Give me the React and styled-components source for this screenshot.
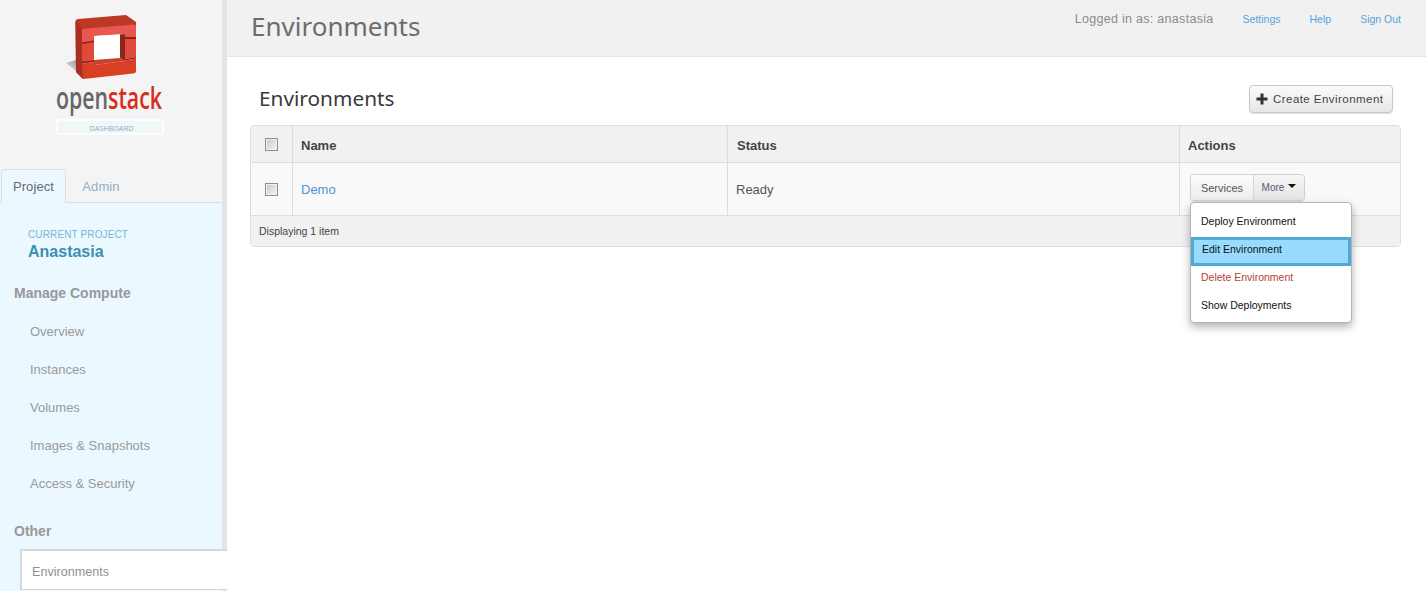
import React from "react";
import styled, { createGlobalStyle } from "styled-components";

const Global = createGlobalStyle`
  html, body { margin: 0; padding: 0; background: #fff; }
  body { font-family: "Liberation Sans", Arial, sans-serif; }
  * { box-sizing: border-box; }
`;
const Page = styled.div`
  display: flex;
  height: 100vh;
  overflow: hidden;
`;
const Sidebar = styled.aside`
  flex: 0 0 227px;
  display: flex;
  flex-direction: column;
  height: 591px;
  background: #f4f4f4;
  border-right: 5px solid #e4e4e4;
`;
const LogoBox = styled.div`
  height: 169px;
  flex: none;
`;
const Logo = styled.svg`
  display: block;
`;
const Tabs = styled.div`
  display: flex;
  height: 34px;
  flex: none;
  border-bottom: 1px solid #dcdfe2;
  padding-left: 1px;
`;
const Tab = styled.div`
  width: ${(p) => (p.$active ? "65px" : "70px")};
  height: 34px;
  display: flex;
  align-items: center;
  justify-content: center;
  font-size: 13px;
  letter-spacing: 0.1px;
  color: ${(p) => (p.$active ? "#6a6a72" : "#90aec4")};
  background: ${(p) => (p.$active ? "#ecf8ff" : "transparent")};
  border: ${(p) => (p.$active ? "1px solid #dcdfe2" : "none")};
  border-bottom: none;
  border-radius: 4px 4px 0 0;
`;
const Panel = styled.div`
  flex: 1;
  background: #ecf8ff;
  padding-top: 26px;
  min-height: 0;
`;
const ProjectLabel = styled.div`
  margin-left: 28px;
  font-size: 10px;
  letter-spacing: 0.13px;
  line-height: 11px;
  color: #7ab5cf;
`;
const ProjectName = styled.div`
  margin: 2px 0 0 28px;
  font-size: 16px;
  line-height: 20px;
  font-weight: bold;
  color: #3d8fb3;
`;
const GroupTitle = styled.div`
  margin: ${(p) => p.$top}px 0 0 14px;
  font-size: 14px;
  line-height: 20px;
  font-weight: bold;
  color: #989898;
`;
const NavList = styled.div`
  display: flex;
  flex-direction: column;
  margin-top: 10px;
`;
const NavItem = styled.div`
  height: 38px;
  line-height: 38px;
  padding-left: 30px;
  font-size: 13px;
  color: #9a9a9a;
`;
const ActiveNav = styled.div`
  height: 41px;
  margin: 8px -5px 0 20px;
  padding-left: 10px;
  line-height: 42px;
  font-size: 12.6px;
  color: #8f8f8f;
  background: #fff;
  border: 2px solid #d8d8d8;
  border-right: none;
  border-bottom-width: 1px;
  position: relative;
`;
const Main = styled.main`
  flex: 1;
  min-width: 0;
  display: flex;
  flex-direction: column;
`;
const TopBar = styled.header`
  flex: none;
  height: 57px;
  background: #f1f1f1;
  border-bottom: 1px solid #e4e4e4;
  display: flex;
  justify-content: space-between;
  padding: 0 25px 0 24px;
`;
const PageTitle = styled.h1`
  margin: 8px 0 0;
  font-family: "Noto Sans", sans-serif;
  font-weight: 400;
  font-size: 26px;
  line-height: 36px;
  color: #6d6d6d;
`;
const UserNav = styled.nav`
  display: flex;
  align-items: center;
  height: 38px;
`;
const UserLabel = styled.span`
  font-size: 12.5px;
  letter-spacing: 0.3px;
  color: #8b8b8b;
  margin-right: 29px;
`;
const TopLink = styled.a`
  font-size: 10.5px;
  color: #52a5de;
  margin-left: ${(p) => p.$gap || 0}px;
`;
const Content = styled.div`
  padding: 28px 25px 0 23px;
  position: relative;
`;
const Heading = styled.div`
  display: flex;
  align-items: center;
  justify-content: space-between;
  height: 28px;
  padding: 0 8px 0 9px;
`;
const SubTitle = styled.h2`
  margin: -3px 0 0;
  font-family: "Noto Sans", sans-serif;
  font-weight: 400;
  font-size: 20.8px;
  color: #3a3a3a;
`;
const CreateButton = styled.button`
  display: flex;
  align-items: center;
  gap: 5px;
  width: 144px;
  height: 28px;
  padding: 0 0 0 6px;
  font-family: "Liberation Sans", sans-serif;
  font-size: 11.5px;
  letter-spacing: 0.45px;
  color: #444;
  background: linear-gradient(#fbfbfb, #e6e6e6);
  border: 1px solid #c8c8c8;
  border-radius: 4px;
  box-shadow: 0 1px 1px rgba(0, 0, 0, 0.12);
`;
const Table = styled.div`
  margin-top: 12px;
  width: 1151px;
  border: 1px solid #dddddd;
  border-radius: 4px;
  overflow: hidden;
`;
const Row = styled.div`
  display: grid;
  grid-template-columns: 41px 435px 452px 1fr;
  height: ${(p) => p.$h}px;
  background: ${(p) => p.$bg};
  border-bottom: 1px solid #dddddd;
`;
const Cell = styled.div`
  display: flex;
  align-items: center;
  padding-left: ${(p) => p.$pad ?? 8}px;
  padding-top: ${(p) => (p.$head ? "2px" : "0")};
  border-left: ${(p) => (p.$first ? "none" : "1px solid #dddddd")};
  font-size: 13px;
  font-weight: ${(p) => (p.$head ? "bold" : "normal")};
  color: ${(p) => (p.$head ? "#444" : "#555")};
`;
const CheckCell = styled(Cell)`
  justify-content: center;
  padding: 0;
`;
const Check = styled.span`
  display: block;
  width: 13px;
  height: 13px;
  border: 1px solid #8e8e8e;
  background: linear-gradient(135deg, #c8c8c8, #f6f6f6);
  box-shadow: inset 0 0 0 1px #f0f0f0;
`;
const DemoLink = styled.a`
  font-size: 13px;
  color: #4f94d4;
`;
const Footer = styled.div`
  height: 30px;
  line-height: 30px;
  padding-left: 8px;
  font-size: 10.5px;
  color: #444;
  background: #f1f1f1;
`;
const ActionGroup = styled.div`
  display: flex;
  height: 27px;
  margin: -3px 0 0 2px;
  border: 1px solid #d0d0d0;
  border-radius: 4px;
  overflow: hidden;
  box-shadow: 0 1px 1px rgba(0, 0, 0, 0.1);
`;
const ActionButton = styled.div`
  width: ${(p) => p.$w}px;
  display: flex;
  align-items: center;
  justify-content: center;
  gap: 4px;
  font-size: ${(p) => p.$fs}px;
  color: ${(p) => p.$color};
  background: ${(p) => p.$bg};
  border-left: ${(p) => (p.$split ? "1px solid #d6d6d6" : "none")};
`;
const Caret = styled.span`
  width: 0;
  height: 0;
  margin-top: -3px;
  border-left: 4px solid transparent;
  border-right: 4px solid transparent;
  border-top: 4px solid #111;
`;
const Menu = styled.div`
  position: absolute;
  left: 963px;
  top: 145px;
  width: 162px;
  height: 121px;
  padding: 4px 0;
  background: #fff;
  border: 1px solid #b4b4b4;
  border-radius: 4px;
  box-shadow: 0 4px 8px rgba(0, 0, 0, 0.3);
`;
const MenuItem = styled.div`
  height: 28px;
  line-height: 28px;
  padding-left: 10px;
  font-size: 10.5px;
  color: ${(p) => p.$color || "#111"};
`;
const ActiveMenuItem = styled(MenuItem)`
  height: 29px;
  margin: 2px 0 -3px;
  line-height: 18px;
  padding-left: 8px;
  background: #97dcff;
  border: 3px solid #52a7d4;
`;

export default function App() {
  return (
    <Page>
      <Global />
      <Sidebar>
        <LogoBox>
          <Logo width="222" height="169" viewBox="0 0 222 169">
            <defs>
              <linearGradient id="sh" x1="1" y1="0" x2="0" y2="1">
                <stop offset="0" stopColor="#444" stopOpacity="0.8" />
                <stop offset="1" stopColor="#999" stopOpacity="0" />
              </linearGradient>
            </defs>
            <path d="M76 60 L66 63 L84 78 L88 70Z" fill="url(#sh)" />
            <path d="M75.500 21 Q75.500 19.500 78 19 L126 15 L136 22 L136 26 L82 30 L83 79 L76 72Z" fill="#bd3826" />
            <path d="M75.500 21 L82 29 L83 79 L76 72Z" fill="#a93020" />
            <path d="M82 29 L134 24.500 Q136 24.500 136 26 L136 38 L125 38 L125 34 L94 36 L94 41 L82 43Z" fill="#e85850" />
            <path d="M82 43 L94 41 L94 61 L82 62Z" fill="#e0483c" />
            <path d="M125 38 L136 38 L136 57 L125 59Z" fill="#e04a3c" />
            <path d="M94 36 L120 34.500 L120 58 L94 60Z" fill="#fff" />
            <path d="M120 34.500 L125 34 L125 61 L120 58Z" fill="#8f2418" />
            <path d="M94 60 L120 58 L125 61 L94 65Z" fill="#c9402c" />
            <path d="M82 42.500 L94 40.500 L94 42 L82 44Z M125 37 L136 37 L136 39 L125 39Z M82 61.500 L94 60.500 L94 62 L82 63.500Z M125 59 L136 57 L136 58.500 L125 60.500Z" fill="#8a2114" />
            <path d="M82 63.500 L94 62 L94 65 L125 61 L125 60.500 L136 58.500 L136 71 Q136 73 133 73.500 L88 78.500 L83 79Z" fill="#d93f23" />
            <text y="109" x="56" fontFamily="Open Sans, sans-serif" fontSize="30" fontWeight="600" fill="#666" textLength="106" lengthAdjust="spacingAndGlyphs">open<tspan fill="#d62d20">stack</tspan></text>
            <rect x="57" y="120" width="106" height="14" rx="2" fill="#f1f6f9" stroke="#fff" strokeWidth="1.500" />
            <text x="89.500" y="130.500" fontFamily="Open Sans, sans-serif" fontSize="8" fill="#8eacb8" textLength="44" lengthAdjust="spacingAndGlyphs">DASHBOARD</text>
          </Logo>
        </LogoBox>
        <Tabs>
          <Tab $active>Project</Tab>
          <Tab>Admin</Tab>
        </Tabs>
        <Panel>
          <ProjectLabel>CURRENT PROJECT</ProjectLabel>
          <ProjectName>Anastasia</ProjectName>
          <GroupTitle $top={21}>Manage Compute</GroupTitle>
          <NavList>
            <NavItem>Overview</NavItem>
            <NavItem>Instances</NavItem>
            <NavItem>Volumes</NavItem>
            <NavItem>Images &amp; Snapshots</NavItem>
            <NavItem>Access &amp; Security</NavItem>
          </NavList>
          <GroupTitle $top={18}>Other</GroupTitle>
          <ActiveNav>Environments</ActiveNav>
        </Panel>
      </Sidebar>
      <Main>
        <TopBar>
          <PageTitle>Environments</PageTitle>
          <UserNav>
            <UserLabel>Logged in as: anastasia</UserLabel>
            <TopLink>Settings</TopLink>
            <TopLink $gap={29}>Help</TopLink>
            <TopLink $gap={29}>Sign Out</TopLink>
          </UserNav>
        </TopBar>
        <Content>
          <Heading>
            <SubTitle>Environments</SubTitle>
            <CreateButton>
              <svg width="12" height="12" viewBox="0 0 12 12">
                <path d="M4.500 0.500h3v4h4v3h-4v4h-3v-4h-4v-3h4z" fill="#333" />
              </svg>
              Create Environment
            </CreateButton>
          </Heading>
          <Table>
            <Row $h={37} $bg="#f1f1f1">
              <CheckCell $first><Check /></CheckCell>
              <Cell $head>Name</Cell>
              <Cell $head $pad={9}>Status</Cell>
              <Cell $head>Actions</Cell>
            </Row>
            <Row $h={53} $bg="#f9f9f9">
              <CheckCell $first><Check /></CheckCell>
              <Cell><DemoLink>Demo</DemoLink></Cell>
              <Cell>Ready</Cell>
              <Cell>
                <ActionGroup>
                  <ActionButton $w={62} $fs={11} $color="#555" $bg="linear-gradient(#fcfcfc,#ececec)">Services</ActionButton>
                  <ActionButton $w={51} $fs={10} $split $color="#5a5a78" $bg="linear-gradient(#f6f6f6,#e4e4e4)">More <Caret /></ActionButton>
                </ActionGroup>
              </Cell>
            </Row>
            <Footer>Displaying 1 item</Footer>
          </Table>
          <Menu>
            <MenuItem>Deploy Environment</MenuItem>
            <ActiveMenuItem>Edit Environment</ActiveMenuItem>
            <MenuItem $color="#b0433a">Delete Environment</MenuItem>
            <MenuItem>Show Deployments</MenuItem>
          </Menu>
        </Content>
      </Main>
    </Page>
  );
}
